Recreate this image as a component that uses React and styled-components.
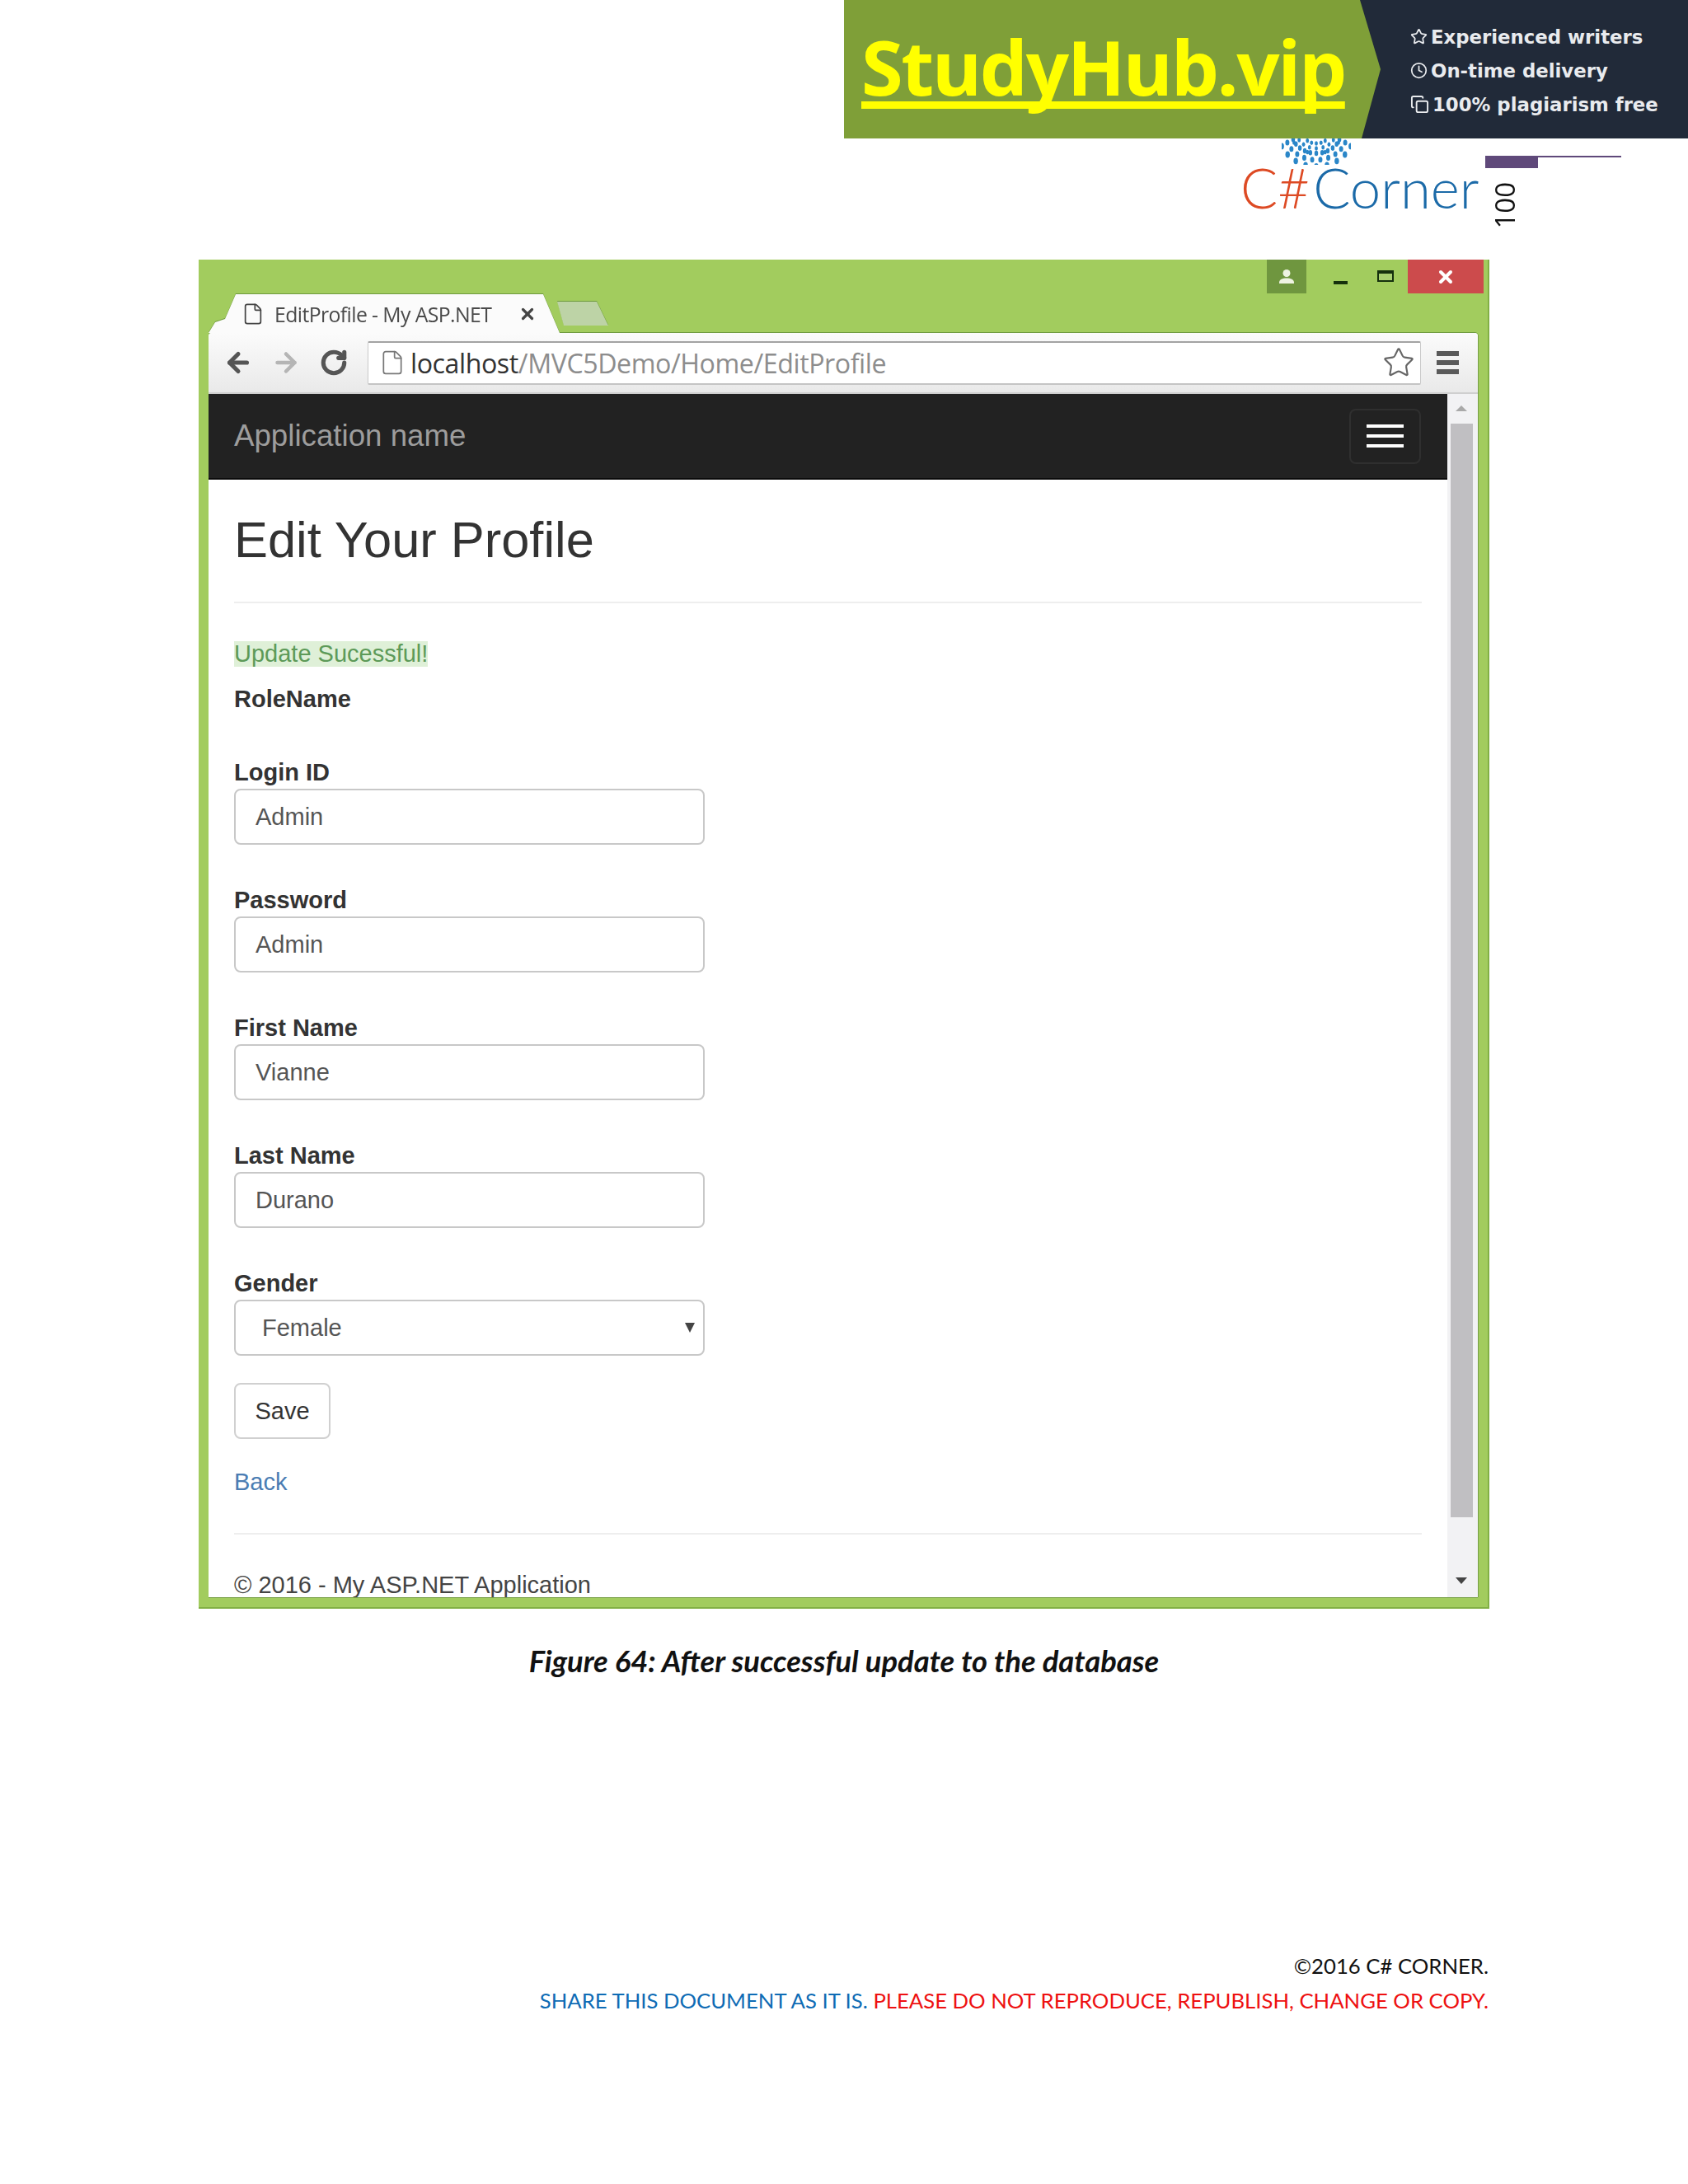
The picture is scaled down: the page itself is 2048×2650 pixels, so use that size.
import React from "react";
import styled, { createGlobalStyle } from "styled-components";
import { ArrowLeft, ArrowRight, RotateCw, File, Star, Clock, Copy, X } from "lucide-react";

const Global = createGlobalStyle`
  html, body { margin: 0; padding: 0; background: #fff; }
  body { font-family: "Liberation Sans", Arial, sans-serif; }
`;

const Page = styled.div`
  width: 2048px;
  height: 2650px;
  overflow: hidden;
  background: #fff;
`;

const BannerRow = styled.div`
  display: flex;
  justify-content: flex-end;
  position: relative;
  z-index: 2;
`;
const Banner = styled.div`
  width: 1024px;
  height: 168px;
  display: flex;
  background: #212a39;
`;
const BannerLeft = styled.div`
  width: 651px;
  height: 168px;
  background: #7f9f38;
  clip-path: polygon(0 0, 626px 0, 651px 84px, 628px 168px, 0 168px);
  box-sizing: border-box;
  padding-left: 21px;
`;
const BannerLink = styled.span`
  font-family: "Open Sans", "Noto Sans", sans-serif;
  font-weight: 700;
  font-size: 92px;
  line-height: 162px;
  letter-spacing: -2.4px;
  color: #ffff00;
  text-decoration: underline;
  text-decoration-thickness: 9px;
  text-underline-offset: 7px;
  text-decoration-skip-ink: none;
`;
const BannerList = styled.ul`
  list-style: none;
  margin: 0;
  padding: 31px 0 0 36px;
  display: flex;
  flex-direction: column;
  gap: 14px;
`;
const BannerItem = styled.li`
  display: flex;
  align-items: center;
  gap: 4px;
  height: 27px;
  font-family: "DejaVu Sans", sans-serif;
  font-weight: 700;
  font-size: 22.8px;
  color: #e9ebee;
  white-space: nowrap;
`;

const Header = styled.div`
  height: 147px;
  display: flex;
  padding-left: 1505px;
  position: relative;
`;
const LogoBlock = styled.div`
  width: 297px;
  position: relative;
`;
const LogoDots = styled.svg`
  display: block;
  margin-left: 50px;
  width: 84px;
  height: 32px;
`;
const LogoText = styled.div`
  font-family: Lato, sans-serif;
  font-weight: 300;
  font-size: 67px;
  line-height: 46px;
  letter-spacing: 0;
  margin-top: 4px;
  white-space: nowrap;
  color: #1b6aa8;
`;
const LogoSharp = styled.span`
  color: #dd4a24;
  margin-right: 4px;
`;
const PageMark = styled.div`
  display: flex;
  flex-direction: column;
  padding-top: 21px;
`;
const MarkLine = styled.div`
  width: 165px;
  height: 2px;
  background: #5f497a;
`;
const MarkBar = styled.div`
  width: 64px;
  height: 13px;
  background: #5f497a;
`;
const PageNumber = styled.div`
  font-family: "Open Sans", sans-serif;
  font-size: 33px;
  line-height: 30px;
  color: #111;
  writing-mode: vertical-rl;
  transform: rotate(180deg);
  margin: 17px 0 0 9px;
  align-self: flex-start;
`;

const Shot = styled.div`
  margin-left: 241px;
  width: 1566px;
  height: 1637px;
  box-sizing: border-box;
  background: #a2cc5e;
  border-bottom: 2px solid #82b045;
  border-right: 2px solid #82b045;
  padding: 0 12px 12px 12px;
  display: flex;
  flex-direction: column;
`;
const TitleStrip = styled.div`
  height: 89px;
  display: flex;
  justify-content: space-between;
  flex: none;
`;
const Tabs = styled.div`
  display: flex;
  align-items: flex-end;
  filter: drop-shadow(0 -1px 0 #6e9a3e);
`;
const Tab = styled.div`
  width: 426px;
  height: 47px;
  box-sizing: border-box;
  padding: 0 0 0 40px;
  background: #fbfbfb;
  clip-path: polygon(0 100%, 8px 34px, 20px 30px, 33px 0, 406px 0, 426px 100%);
  display: flex;
  align-items: center;
  gap: 12px;
  color: #444;
`;
const TabLabel = styled.span`
  font-family: "Open Sans", sans-serif;
  font-size: 24.8px;
  letter-spacing: -0.6px;
  white-space: nowrap;
  width: 284px;
  color: #4a4a4a;
`;
const NewTab = styled.div`
  width: 62px;
  height: 29px;
  margin: 0 0 9px -3px;
  background: #bdd3a6;
  clip-path: polygon(0 0, 48px 0, 62px 100%, 8px 100%);
`;
const WindowButtons = styled.div`
  display: flex;
  align-items: flex-start;
`;
const UserButton = styled.div`
  width: 48px;
  height: 41px;
  background: #6f963f;
  display: flex;
  align-items: center;
  justify-content: center;
`;
const MinButton = styled.div`
  width: 17px;
  height: 4px;
  background: #15300d;
  margin: 26px 36px 0 33px;
`;
const MaxButton = styled.div`
  width: 20px;
  height: 14px;
  box-sizing: border-box;
  border: 2px solid #15300d;
  border-top-width: 4px;
  background: #a8cf70;
  margin: 13px 17px 0 0;
`;
const CloseButton = styled.div`
  width: 92px;
  height: 41px;
  margin-right: -7px;
  background: #cc4b4c;
  color: #fff;
  display: flex;
  align-items: center;
  justify-content: center;
`;

const BrowserBody = styled.div`
  flex: 1;
  min-height: 0;
  display: flex;
  flex-direction: column;
  background: #fff;
  border-radius: 4px 4px 0 0;
  box-shadow: 1px 0 0 #78a046, 0 1px 0 #78a046, 0 -1px 0 #6e9a3e;
  overflow: hidden;
`;
const Toolbar = styled.div`
  height: 74px;
  flex: none;
  box-sizing: border-box;
  display: flex;
  align-items: center;
  padding: 0 23px 0 18px;
  background: linear-gradient(#fbfbfb, #e9e9e9);
  border-bottom: 2px solid #cfcfcf;
`;
const NavIcons = styled.div`
  display: flex;
  align-items: center;
  width: 175px;
  color: #5a5a5a;
`;
const NavSlot = styled.div`
  width: 60px;
  display: flex;
  color: ${(p) => (p.$faded ? "#b5b5b5" : "#555")};
`;
const UrlBox = styled.div`
  width: 1278px;
  height: 53px;
  box-sizing: border-box;
  background: #fff;
  border: 1px solid #c9c9c9;
  border-top: 2px solid #a3a3a3;
  border-bottom: 2px solid #c4c4c4;
  border-radius: 2px;
  display: flex;
  align-items: center;
  padding: 0 6px 0 13px;
`;
const UrlText = styled.div`
  flex: 1;
  margin-left: 6px;
  font-family: "Open Sans", sans-serif;
  font-size: 32.2px;
  letter-spacing: -0.45px;
  color: #8d8d8d;
  white-space: nowrap;
`;
const UrlHost = styled.span`
  color: #333;
`;
const ChromeMenu = styled.div`
  margin-left: 19px;
  display: flex;
  flex-direction: column;
  gap: 5px;
`;
const ChromeMenuBar = styled.div`
  width: 27px;
  height: 6px;
  background: #5a5a5a;
`;

const Viewport = styled.div`
  flex: 1;
  min-height: 0;
  display: flex;
  overflow: hidden;
`;
const Site = styled.div`
  width: 1503px;
  flex: none;
  overflow: hidden;
`;
const Navbar = styled.div`
  height: 104px;
  box-sizing: border-box;
  background: #222;
  border-bottom: 2px solid #0b0b0b;
  display: flex;
  align-items: center;
  justify-content: space-between;
  padding: 0 32px 0 31px;
`;
const Brand = styled.div`
  font-size: 36.7px;
  color: #9d9d9d;
`;
const Toggle = styled.div`
  width: 87px;
  height: 67px;
  box-sizing: border-box;
  border: 2px solid #2f2f2f;
  border-radius: 8px;
  display: flex;
  flex-direction: column;
  align-items: center;
  justify-content: center;
  gap: 8px;
`;
const ToggleBar = styled.div`
  width: 45px;
  height: 4px;
  background: #fff;
`;
const Content = styled.div`
  padding: 0 31px;
`;
const Title = styled.h2`
  margin: 40px 0 42px;
  font-size: 61.4px;
  line-height: 66px;
  font-weight: 400;
  color: #333;
`;
const Rule = styled.hr`
  margin: 0;
  border: 0;
  height: 2px;
  background: #eee;
`;
const Notice = styled.div`
  margin-top: 46px;
  height: 31px;
  line-height: 31px;
  font-size: 29px;
  color: #5d9a58;
  white-space: nowrap;
`;
const NoticeText = styled.span`
  display: inline-block;
  background: #dff0d8;
`;
const Label = styled.div`
  font-size: 29px;
  font-weight: 700;
  line-height: 36px;
  color: #333;
`;
const RoleLabel = styled(Label)`
  margin: 21px 0 53px;
`;
const Group = styled.div`
  margin-bottom: ${(p) => (p.$last ? "33px" : "49px")};
`;
const Field = styled.div`
  width: 571px;
  height: 68px;
  margin-top: 2px;
  box-sizing: border-box;
  border: 2px solid #c8c8c8;
  border-radius: 8px;
  display: flex;
  align-items: center;
  justify-content: space-between;
  padding: 0 8px 0 ${(p) => (p.$select ? "32px" : "24px")};
  font-size: 29px;
  color: #555;
`;
const Caret = styled.span`
  width: 0;
  height: 0;
  border-left: 6px solid transparent;
  border-right: 6px solid transparent;
  border-top: 12px solid #444;
  margin: 0 2px 0 0;
`;
const SaveButton = styled.div`
  width: 117px;
  height: 68px;
  box-sizing: border-box;
  border: 2px solid #d0d0d0;
  border-radius: 8px;
  display: flex;
  align-items: center;
  justify-content: center;
  font-size: 29px;
  color: #333;
`;
const BackLink = styled.div`
  margin: 34px 0 44px;
  font-size: 29px;
  line-height: 36px;
  color: #4b7db3;
`;
const FooterText = styled.div`
  margin-top: 43px;
  font-size: 29px;
  line-height: 36px;
  color: #444;
  white-space: nowrap;
`;
const Scrollbar = styled.div`
  flex: 1;
  position: relative;
  background: #f2f2f4;
`;
const ScrollThumb = styled.div`
  position: absolute;
  left: 4px;
  top: 36px;
  width: 27px;
  height: 1327px;
  background: #c0bfc2;
`;
const ScrollArrow = styled.span`
  position: absolute;
  left: 10px;
  width: 0;
  height: 0;
  border-left: 7px solid transparent;
  border-right: 7px solid transparent;
  ${(p) =>
    p.$up
      ? "top: 14px; border-bottom: 7px solid #a9a9a9;"
      : "bottom: 16px; border-top: 8px solid #444;"}
`;

const Caption = styled.div`
  margin-top: 44px;
  text-align: center;
  font-family: Lato, Carlito, sans-serif;
  font-weight: 700;
  font-style: italic;
  font-size: 36.4px;
  line-height: 38px;
  color: #111;
`;
const Legal = styled.div`
  margin: 330px 0 0;
  width: 1806px;
  text-align: right;
  font-family: Lato, Carlito, sans-serif;
  font-size: 25.7px;
  line-height: 42px;
  white-space: nowrap;
  color: #111;
`;
const ShareText = styled.span`
  color: #0f6cb5;
`;
const WarnText = styled.span`
  color: #ee1111;
`;

const dots = [];
[30, 38, 46].forEach((r, ri) => {
  for (let i = 0; i < 13 - ri; i++) {
    const a = (Math.PI * (i + 0.5)) / (13 - ri);
    const y = -8 + (r - 4) * Math.sin(a);
    if (y > 0) dots.push({ x: 42 + r * Math.cos(a), y, r: 2.8 + ri * 0.3 });
  }
});
[14, 20, 26].forEach((r) => {
  for (let i = 0; i < 9; i++) {
    const a = (Math.PI * (i + 0.5)) / 9;
    const y = r * Math.sin(a) - 8;
    if (y > 0) dots.push({ x: 42 + r * 1.2 * Math.cos(a), y, r: 2.4 });
  }
});

const fields = [
  ["Login ID", "Admin"],
  ["Password", "Admin"],
  ["First Name", "Vianne"],
  ["Last Name", "Durano"],
];

export default function App() {
  return (
    <Page>
      <Global />
      <BannerRow>
        <Banner>
          <BannerLeft>
            <BannerLink>StudyHub.vip</BannerLink>
          </BannerLeft>
          <BannerList>
            <BannerItem><Star size={21} strokeWidth={2} />Experienced writers</BannerItem>
            <BannerItem><Clock size={21} strokeWidth={2} />On-time delivery</BannerItem>
            <BannerItem><Copy size={23} strokeWidth={2} />100% plagiarism free</BannerItem>
          </BannerList>
        </Banner>
      </BannerRow>
      <Header>
        <LogoBlock>
          <LogoDots viewBox="0 0 84 32">
            {dots.map((d, i) => (
              <ellipse key={i} cx={d.x} cy={d.y} rx={d.r * 0.8} ry={d.r * 1.15} fill="#2a86c8" />
            ))}
          </LogoDots>
          <LogoText>
            <LogoSharp>C#</LogoSharp>Corner
          </LogoText>
        </LogoBlock>
        <PageMark>
          <MarkLine />
          <MarkBar />
          <PageNumber>100</PageNumber>
        </PageMark>
      </Header>
      <Shot>
        <TitleStrip>
          <Tabs>
            <Tab>
              <File size={28} strokeWidth={1.5} />
              <TabLabel>EditProfile - My ASP.NET</TabLabel>
              <X size={22} strokeWidth={3.5} />
            </Tab>
            <NewTab />
          </Tabs>
          <WindowButtons>
            <UserButton>
              <svg width="20" height="22" viewBox="0 0 20 22" fill="#eef3e2">
                <circle cx="10" cy="6.5" r="4.5" />
                <path d="M1 18c0-4 4-5.5 9-5.5s9 1.5 9 5.5v1H1z" />
              </svg>
            </UserButton>
            <MinButton />
            <MaxButton />
            <CloseButton>
              <X size={24} strokeWidth={4} />
            </CloseButton>
          </WindowButtons>
        </TitleStrip>
        <BrowserBody>
          <Toolbar>
            <NavIcons>
              <NavSlot><ArrowLeft size={36} strokeWidth={3.4} /></NavSlot>
              <NavSlot $faded><ArrowRight size={36} strokeWidth={3} /></NavSlot>
              <NavSlot><RotateCw size={34} strokeWidth={3.6} /></NavSlot>
            </NavIcons>
            <UrlBox>
              <File size={32} strokeWidth={1.3} color="#777" />
              <UrlText>
                <UrlHost>localhost</UrlHost>/MVC5Demo/Home/EditProfile
              </UrlText>
              <Star size={40} strokeWidth={1.3} color="#666" />
            </UrlBox>
            <ChromeMenu>
              <ChromeMenuBar />
              <ChromeMenuBar />
              <ChromeMenuBar />
            </ChromeMenu>
          </Toolbar>
          <Viewport>
            <Site>
              <Navbar>
                <Brand>Application name</Brand>
                <Toggle>
                  <ToggleBar />
                  <ToggleBar />
                  <ToggleBar />
                </Toggle>
              </Navbar>
              <Content>
                <Title>Edit Your Profile</Title>
                <Rule />
                <Notice><NoticeText>Update Sucessful!</NoticeText></Notice>
                <RoleLabel>RoleName</RoleLabel>
                {fields.map(([label, value]) => (
                  <Group key={label}>
                    <Label>{label}</Label>
                    <Field>{value}</Field>
                  </Group>
                ))}
                <Group $last>
                  <Label>Gender</Label>
                  <Field $select>
                    Female
                    <Caret />
                  </Field>
                </Group>
                <SaveButton>Save</SaveButton>
                <BackLink>Back</BackLink>
                <Rule />
                <FooterText>© 2016 - My ASP.NET Application</FooterText>
              </Content>
            </Site>
            <Scrollbar>
              <ScrollArrow $up />
              <ScrollThumb />
              <ScrollArrow />
            </Scrollbar>
          </Viewport>
        </BrowserBody>
      </Shot>
      <Caption>Figure 64: After successful update to the database</Caption>
      <Legal>
        ©2016 C# CORNER.
        <br />
        <ShareText>SHARE THIS DOCUMENT AS IT IS. </ShareText>
        <WarnText>PLEASE DO NOT REPRODUCE, REPUBLISH, CHANGE OR COPY.</WarnText>
      </Legal>
    </Page>
  );
}
